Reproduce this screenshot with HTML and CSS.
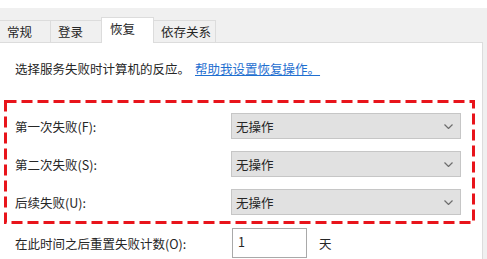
FILE: index.html
```html
<!DOCTYPE html>
<html lang="zh-CN">
<head>
<meta charset="utf-8">
<link rel="stylesheet" href="styles.css">
</head>
<body>
<div class="topband"></div>
<div class="tabbar">
  <div class="tab t1">常规</div>
  <div class="tab t2">登录</div>
  <div class="tab active">恢复</div>
  <div class="tab t4">依存关系</div>
</div>
<div class="main">
  <div class="panel">
    <div class="desc">选择服务失败时计算机的反应。<a class="link" href="#">帮助我设置恢复操作。</a></div>
    <div class="box">
      <svg class="dash" width="471" height="124" viewBox="0 0 471 124"><rect x="1.5" y="1.5" width="468" height="121" fill="none" stroke="#e8141b" stroke-width="3" stroke-dasharray="11 5"/></svg>
      <div class="row"><span class="label">第一次失败(F):</span><div class="select"><span>无操作</span><svg class="chev" width="9" height="5" viewBox="0 0 9 5"><path d="M0.5 0.5 L4.5 4.5 L8.5 0.5" fill="none" stroke="#6d6d6d" stroke-width="1.2"/></svg></div></div>
      <div class="row"><span class="label">第二次失败(S):</span><div class="select"><span>无操作</span><svg class="chev" width="9" height="5" viewBox="0 0 9 5"><path d="M0.5 0.5 L4.5 4.5 L8.5 0.5" fill="none" stroke="#6d6d6d" stroke-width="1.2"/></svg></div></div>
      <div class="row"><span class="label">后续失败(U):</span><div class="select"><span>无操作</span><svg class="chev" width="9" height="5" viewBox="0 0 9 5"><path d="M0.5 0.5 L4.5 4.5 L8.5 0.5" fill="none" stroke="#6d6d6d" stroke-width="1.2"/></svg></div></div>
    </div>
    <div class="reset">
      <span class="rlabel">在此时间之后重置失败计数(O):</span>
      <div class="input">1</div>
      <span class="unit">天</span>
    </div>
  </div>
</div>
</body>
</html>
```
FILE: styles.css
```css
html, body {
  margin: 0;
  padding: 0;
  background: #ffffff;
}
body {
  width: 487px;
  height: 259px;
  overflow: hidden;
  font-family: "Noto Sans CJK SC", "Noto Sans", sans-serif;
  font-size: 12.5px;
  color: #262626;
}
.topband {
  height: 8px;
  background: #ffffff;
}
.tabbar {
  height: 34px;
  background: #f0f0f0;
  display: flex;
  align-items: flex-end;
}
.tab {
  box-sizing: border-box;
  height: 22px;
  padding-left: 7px;
  line-height: 21px;
  border-top: 1px solid #dcdcdc;
  border-right: 1px solid #dcdcdc;
  background: #f0f0f0;
}
.t1 { width: 51px; }
.t2 { width: 51px; }
.t4 { width: 62px; }
.tab.active {
  width: 53px;
  height: 26px;
  line-height: 22px;
  padding-left: 8px;
  background: #ffffff;
  border-left: 1px solid #dcdcdc;
  margin-left: -1px;
  margin-bottom: -1px;
  position: relative;
}
.main {
  display: flex;
  background: #f0f0f0;
  height: 217px;
}
.panel {
  width: 482px;
  background: #ffffff;
  border-top: 1px solid #dcdcdc;
  border-right: 1px solid #dcdcdc;
}
.desc {
  margin-top: 16px;
  padding-left: 15px;
  line-height: 20px;
  height: 20px;
}
.link {
  color: #1f6fd0;
  text-decoration: underline;
  margin-left: 5px;
}
.box {
  position: relative;
  box-sizing: border-box;
  margin-top: 21px;
  margin-left: 4px;
  width: 471px;
  height: 124px;
  padding: 13px 0 0 11px;
  display: flex;
  flex-direction: column;
  gap: 12px;
}
.dash {
  position: absolute;
  left: 0;
  top: 0;
}
.row {
  display: flex;
  align-items: center;
  height: 26px;
}
.label {
  width: 216px;
}
.select {
  box-sizing: border-box;
  width: 230px;
  height: 26px;
  background: #e1e1e1;
  border: 1px solid #c6c6c6;
  display: flex;
  align-items: center;
  justify-content: space-between;
  padding: 0 7px 0 4px;
}
.chev {
  display: block;
}
.reset {
  display: flex;
  align-items: center;
  margin-top: 4px;
  padding-left: 15px;
}
.rlabel {
  width: 217px;
}
.input {
  box-sizing: border-box;
  width: 75px;
  height: 30px;
  border: 1px solid #a9a9a9;
  background: #ffffff;
  padding-left: 5px;
  line-height: 26px;
}
.unit {
  margin-left: 12px;
}
```
